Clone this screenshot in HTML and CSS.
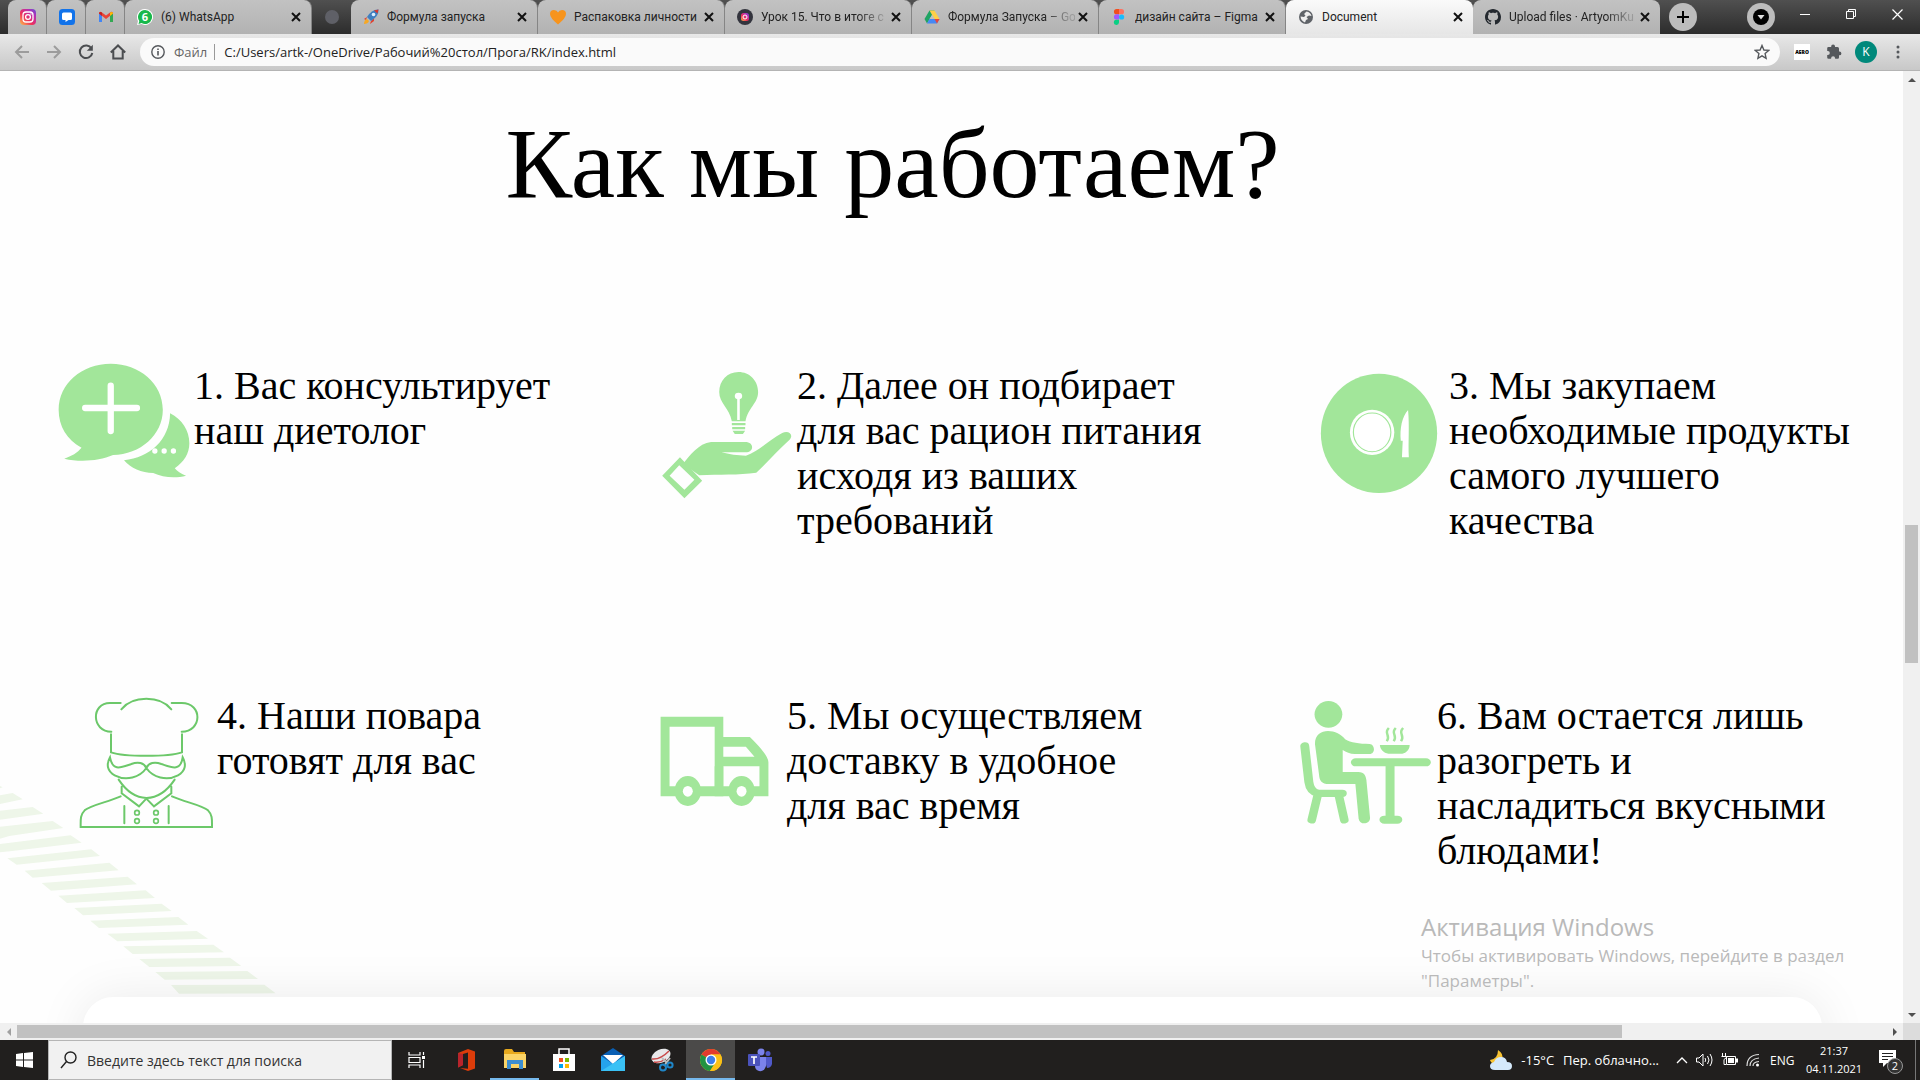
FILE: index.html
```html
<!DOCTYPE html>
<html lang="ru">
<head>
<meta charset="utf-8">
<title>Document</title>
<link rel="stylesheet" href="styles.css">
</head>
<body>
<svg class="defs" aria-hidden="true">
  <defs>
    <linearGradient id="insta" x1="0" y1="1" x2="1" y2="0"><stop offset="0" stop-color="#fdc04a"/><stop offset=".4" stop-color="#ee2f5b"/><stop offset=".75" stop-color="#b52fb4"/><stop offset="1" stop-color="#5a52d8"/></linearGradient>
    <symbol id="x" viewBox="0 0 10 10"><path d="M1 1l8 8M9 1L1 9" stroke="#111" stroke-width="2"/></symbol>
  </defs>
</svg>

<header class="tabs" role="tablist">
  <div class="tab pinned" role="tab" aria-label="Instagram"><svg class="fav" viewBox="0 0 16 16"><rect width="16" height="16" rx="4" fill="url(#insta)"/><rect x="3" y="3" width="10" height="10" rx="3" fill="none" stroke="#fff" stroke-width="1.3"/><circle cx="8" cy="8" r="2.4" fill="none" stroke="#fff" stroke-width="1.3"/><circle cx="11" cy="5" r=".7" fill="#fff"/></svg></div>
  <div class="tab pinned" role="tab" aria-label="Chat"><svg class="fav" viewBox="0 0 16 16"><rect width="16" height="16" rx="3.5" fill="#1273ea"/><path d="M4.500 3.500h7q1.500 0 1.500 1.500v4.500q0 1.500-1.500 1.500H9.500l-3 2V11h-2Q3 11 3 9.500V5q0-1.500 1.500-1.500z" fill="#fff"/></svg></div>
  <div class="tab pinned" role="tab" aria-label="Gmail"><svg class="fav" viewBox="0 0 16 16"><path d="M1 4v9h3V6z" fill="#4285f4"/><path d="M15 4v9h-3V6z" fill="#34a853"/><path d="M1 4.500l7 5.500 7-5.500V4q-1-2-3-.5L8 6.500 4 3.500Q2 2 1 4z" fill="#ea4335"/><path d="M12 3.500q3-1.500 3 1L12 7z" fill="#fbbc04"/><path d="M1 4.500L4 7V3.500Q1 2 1 4.500z" fill="#c5221f"/></svg></div>
  <div class="tab" role="tab"><svg class="fav" viewBox="0 0 16 16"><path d="M8 0a8 8 0 1 1-3.600 15.100L0 16l1-4A8 8 0 0 1 8 0z" fill="#fff"/><path d="M8 1a7 7 0 1 1-3.400 13.100L1.500 15l.8-3A7 7 0 0 1 8 1z" fill="#19b84b"/><text x="8" y="12" text-anchor="middle" font-family="Open Sans" font-weight="700" font-size="11" fill="#fff">6</text></svg><span class="title">(6) WhatsApp</span><button class="close" aria-label="Закрыть"><svg><use href="#x"/></svg></button></div>
  <div class="ghost"><i></i></div>
  <div class="tab" role="tab"><svg class="fav" viewBox="0 0 16 16"><path d="M4 8L1 10l2 1M8 12l-1 3 4-3V9z" fill="#e0412f"/><path d="M15.500.5Q9 0 4 8l4 4q8-5 7.500-11.500z" fill="#3f7fc0"/><path d="M15.500.5L11 1.500l3.500 3z" fill="#d9372b"/><circle cx="10.500" cy="5.500" r="1.800" fill="#dbeeff"/><path d="M1 15q0-4 3-5l2 2q-1 3-5 3z" fill="#f7a823"/></svg><span class="title">Формула запуска</span><button class="close" aria-label="Закрыть"><svg><use href="#x"/></svg></button></div>
  <div class="tab" role="tab"><svg class="fav" viewBox="0 0 16 16"><path d="M8 15.500Q0 9 0 5q0-4 4-4 3 0 4 2.500Q9 1 12 1q4 0 4 4 0 4-8 10.500z" fill="#f7941d"/></svg><span class="title">Распаковка личности</span><button class="close" aria-label="Закрыть"><svg><use href="#x"/></svg></button></div>
  <div class="tab" role="tab"><svg class="fav" viewBox="0 0 16 16"><circle cx="8" cy="8" r="8" fill="#33343d"/><rect x="4" y="4" width="8" height="8" rx="2.500" fill="url(#insta)"/><circle cx="8" cy="8" r="2" fill="none" stroke="#fff"/></svg><span class="title fade">Урок 15. Что в итоге с</span><button class="close" aria-label="Закрыть"><svg><use href="#x"/></svg></button></div>
  <div class="tab" role="tab"><svg class="fav" viewBox="0 0 16 16"><path d="M5.500 1.500h5L8 6l-5 8.500L.5 10z" fill="#1fa463"/><path d="M5.500 1.500h5l5 8.500h-5z" fill="#ffcf48"/><path d="M5.500 10h10L13 14.500H3z" fill="#4688f4"/><path d="M10.500 10h5L13 14.500z" fill="#e8453c"/><path d="M8 6l2.500 4h-5z" fill="#c0c0c0"/></svg><span class="title fade">Формула Запуска – Go</span><button class="close" aria-label="Закрыть"><svg><use href="#x"/></svg></button></div>
  <div class="tab" role="tab"><svg class="fav" viewBox="0 0 16 16"><path d="M8 0H5.600a2.600 2.600 0 0 0 0 5.300H8z" fill="#f24e1e"/><path d="M8 0h2.400a2.600 2.600 0 0 1 0 5.300H8z" fill="#ff7262"/><path d="M8 5.300H5.600a2.600 2.600 0 0 0 0 5.300H8z" fill="#a259ff"/><circle cx="10.600" cy="8" r="2.600" fill="#1abcfe"/><path d="M8 10.700H5.600A2.600 2.600 0 1 0 8 13.400z" fill="#0acf83"/></svg><span class="title">дизайн сайта – Figma</span><button class="close" aria-label="Закрыть"><svg><use href="#x"/></svg></button></div>
  <div class="tab active" role="tab" aria-selected="true"><svg class="fav" viewBox="0 0 16 16"><circle cx="8" cy="8" r="7" fill="#5f6368"/><path d="M8.500 2.500L6 5l1.500 1.500L6 8 2.500 7.500Q3 12 7 13.500L8 11l2-1-1.500-2L11 6.500l2.500.5Q12.500 3 8.500 2.500z" fill="#eee"/></svg><span class="title">Document</span><button class="close" aria-label="Закрыть"><svg><use href="#x"/></svg></button></div>
  <div class="tab last" role="tab"><svg class="fav" viewBox="0 0 16 16"><path fill="#24292f" d="M8 0C3.580 0 0 3.580 0 8c0 3.540 2.290 6.530 5.470 7.590.4.070.55-.17.55-.38 0-.19-.01-.82-.01-1.490-2.010.37-2.530-.49-2.690-.94-.09-.23-.48-.94-.82-1.130-.28-.15-.68-.52-.01-.53.63-.01 1.080.58 1.230.82.72 1.210 1.870.87 2.330.66.070-.52.280-.87.510-1.070-1.780-.2-3.640-.89-3.640-3.950 0-.87.310-1.590.82-2.150-.08-.2-.36-1.020.08-2.120 0 0 .67-.21 2.200.82.640-.18 1.320-.27 2-.27s1.360.09 2 .27c1.530-1.040 2.200-.82 2.200-.82.440 1.100.160 1.920.080 2.120.510.560.820 1.270.820 2.150 0 3.070-1.870 3.750-3.650 3.950.290.250.540.730.540 1.480 0 1.070-.01 1.930-.01 2.200 0 .210.150.460.550.380A8.010 8.010 0 0 0 16 8c0-4.420-3.580-8-8-8z"/></svg><span class="title fade">Upload files · ArtyomKu</span><button class="close" aria-label="Закрыть"><svg><use href="#x"/></svg></button></div>
  <button class="round" aria-label="Новая вкладка"><svg width="14" height="14"><path d="M7 1v12M1 7h12" stroke="#000" stroke-width="2"/></svg></button>
  <button class="round search-tabs" aria-label="Поиск вкладок"><svg width="16" height="16"><circle cx="8" cy="8" r="8"/><path d="M4.500 6h7L8 10.500z" fill="#ddd"/></svg></button>
  <div class="window">
    <button aria-label="Свернуть"><svg width="10" height="10"><path d="M0 5.500h10" stroke="#fff"/></svg></button>
    <button aria-label="Восстановить"><svg width="10" height="10" fill="none" stroke="#fff"><path d="M.5 2.500h7v7h-7zM2.500 2.500v-2h7v7h-2"/></svg></button>
    <button aria-label="Закрыть окно"><svg width="11" height="11"><path d="M.5.5l10 10M10.500.5l-10 10" stroke="#fff" stroke-width="1.200"/></svg></button>
  </div>
</header>

<nav class="toolbar">
  <button class="tool dim" aria-label="Назад"><svg viewBox="0 0 16 16"><path d="M15 8H2M8 2L2 8l6 6"/></svg></button>
  <button class="tool dim" aria-label="Вперёд"><svg viewBox="0 0 16 16"><path d="M1 8h13M8 2l6 6-6 6"/></svg></button>
  <button class="tool" aria-label="Обновить"><svg viewBox="0 0 16 16"><path d="M13.500 4.500A6.300 6.300 0 1 0 14.300 9"/><path d="M14.800.8v6H8.800z" fill="#4b4d50" stroke="none"/></svg></button>
  <button class="tool" aria-label="Домой"><svg viewBox="0 0 16 16"><path d="M.8 8.500L8 1.500l7.200 7M3.300 7v7.500h9.400V7"/></svg></button>
  <div class="omnibox">
    <svg class="info" viewBox="0 0 14 14"><circle cx="7" cy="7" r="6.200" fill="none" stroke="#55585c" stroke-width="1.400"/><path d="M7 6v4.500M7 3.500v1.600" stroke="#55585c" stroke-width="1.600"/></svg>
    <label for="url">Файл</label>
    <input id="url" type="text" value="C:/Users/artk-/OneDrive/Рабочий%20стол/Прога/RK/index.html">
    <svg class="star" viewBox="0 0 16 16"><path d="M8 1.500l1.900 4.500 4.800.4-3.600 3.200 1 4.800L8 11.900l-4.100 2.500 1-4.800L1.300 6.400 6.100 6z" fill="none" stroke="#55585c" stroke-width="1.400"/></svg>
  </div>
  <button class="tool ext" aria-label="Aero"><span>AERO</span></button>
  <button class="tool" aria-label="Расширения"><svg viewBox="0 0 16 16"><path d="M13.500 7.500H13V4.500Q13 3 11.500 3H9V2.300a1.900 1.900 0 0 0-3.800 0V3H2.500Q1.200 3 1.200 4.300v2.600h.6a2 2 0 0 1 0 4h-.6v2.600q0 1.300 1.300 1.300h2.600v-.6a2 2 0 0 1 4 0v.6h2.600q1.300 0 1.300-1.300v-2.200h.5a1.900 1.900 0 0 0 0-3.800z" fill="#55585c" stroke="none"/></svg></button>
  <button class="tool avatar" aria-label="Профиль"><span>K</span></button>
  <button class="tool" aria-label="Меню"><svg viewBox="0 0 16 16"><g fill="#55585c" stroke="none"><circle cx="8" cy="3" r="1.500"/><circle cx="8" cy="8" r="1.500"/><circle cx="8" cy="13" r="1.500"/></g></svg></button>
</nav>

<div class="view">
  <main class="page">
    <svg class="stripes" viewBox="0 300 900 660" fill="#eef6e9">
      <path d="M0 318l8 4-8 3zM0 346l38-7 30 19-68 14zM0 392l98-11 32 20-130 18zM0 440l158-17 32 21-162 24-28 8zM0 492l212-26 33 22-215 26-30 3z"/>
      <path d="M22 535l252-27 26 20-250 26zM74 572l254-24 28 23-258 22zM125 609l258-19 28 23-258 19zM175 647l262-16 28 23-264 15zM223 684l262-13 30 22-266 13zM271 722l264-11 30 23-268 10zM322 761l268-8 34 23-272 8zM370 799l270-5 32 23-274 5zM418 837l272-4 34 25-276 3zM466 876l276-3 32 24-280 2zM513 915l280-1 34 26-290 1z"/>
    </svg>
    <h1>Как мы работаем?</h1>
    <ol class="steps upper">
      <li>
        <svg viewBox="42 69 422 420" preserveAspectRatio="none">
          <path d="M213 71c87 0 157 60 157 138 0 76-68 134-150 136-42 18-100 22-147 11 22-8 40-18 52-33-44-24-69-64-69-114 0-78 70-138 157-138z"/>
          <path d="M392 220c36 18 58 52 58 90 0 30-16 56-44 75 8 10 20 17 34 22-30 8-70 6-99-8-35 0-68-14-88-38 78-8 137-60 139-141z"/>
          <path d="M213 137v136M136 204h156" stroke="#fff" stroke-width="19" stroke-linecap="round"/>
          <g fill="#fff"><circle cx="346" cy="333" r="8"/><circle cx="374" cy="333" r="8"/><circle cx="402" cy="333" r="8"/></g>
        </svg>
        <p>1. Вас консультирует<br>наш диетолог</p>
      </li>
      <li>
        <svg viewBox="46 69 378 420" preserveAspectRatio="none">
          <path d="M266 96c30 0 53 26 53 60 0 34-28 48-34 88h-37c-6-40-34-54-34-88 0-34 22-60 52-60z"/>
          <path d="M248 249h37v7h-37zM249 261h35v7h-35zM250 272h34l-6 10h-22z"/>
          <path d="M266 168v72" stroke="#fff" stroke-width="7"/><circle cx="266" cy="168" r="10" fill="#fff"/>
          <path d="M116 372c18-24 42-62 76-66h92c26 0 24 32 0 31h-64c20 6 44 10 66 10 34-12 60-46 98-68 18-10 32 6 20 20-32 32-58 66-90 99-48 8-100 4-154 8z"/>
          <path d="M108 352l60 70-48 53-60-68zM106 376l-26 31 40 42 27-30z" fill-rule="evenodd"/>
        </svg>
        <p>2. Далее он подбирает<br>для вас рацион питания<br>исходя из ваших<br>требований</p>
      </li>
      <li>
        <svg viewBox="23 69 366 420" preserveAspectRatio="none">
          <ellipse cx="206" cy="280" rx="152" ry="179"/>
          <ellipse cx="188" cy="277" rx="58" ry="68" fill="#fff"/>
          <ellipse cx="188" cy="277" rx="49" ry="58" fill="none" stroke="#a2e69a" stroke-width="3"/>
          <path d="M282 210c-16 20-22 56-19 92h5l-2 50h18c-2-48 2-90-2-142z" fill="#fff"/>
        </svg>
        <p>3. Мы закупаем<br>необходимые продукты<br>самого лучшего<br>качества</p>
      </li>
    </ol>
    <ol class="steps lower">
      <li>
        <svg class="line" viewBox="231 39 420 420" preserveAspectRatio="none">
          <path d="M362 69h-32c-58 0-56 86 4 86M364 88c34-42 116-42 150 0M515 69h30c64 0 62 86 0 86M333 163v54c40 14 172 14 213 0v-54"/>
          <path d="M330 232c8 44 34 30 64 20 20-8 38-4 45 12 7-16 25-20 45-12 30 10 58 24 64-20 12 22 8 42-14 54-34 18-76 6-95-22-19 28-61 40-95 22-22-12-26-32-14-54z"/>
          <path d="M356 299c48 72 118 74 168 0M365 320v20l52 39 22-23 23 23 52-39v-20M362 349c-40 18-90 26-108 42-14 14-12 30-12 50h394c0-20 2-36-12-50-18-16-68-24-108-42M373 378v52M506 378v52"/>
          <g stroke-width="5"><circle cx="411" cy="398" r="7"/><circle cx="468" cy="398" r="7"/><circle cx="411" cy="423" r="7"/><circle cx="468" cy="423" r="7"/></g>
        </svg>
        <p>4. Наши повара<br>готовят для вас</p>
      </li>
      <li>
        <svg viewBox="21 39 422 420" preserveAspectRatio="none">
          <path fill-rule="evenodd" d="M62 110h189v61h80q56 54 56 76v102H62zM89 140v179h136V140zM251 200v30h94l-26-30zM251 259v60h109v-60z"/>
          <ellipse cx="144" cy="333" rx="40" ry="45"/><ellipse cx="306" cy="333" rx="40" ry="45"/>
          <ellipse cx="144" cy="334" rx="15" ry="16" fill="#fff"/><ellipse cx="306" cy="334" rx="15" ry="16" fill="#fff"/>
          <path d="M225 349v-30h26v30zM225 259h26v60h-26z"/>
        </svg>
        <p>5. Мы осуществляем<br>доставку в удобное<br>для вас время</p>
      </li>
      <li>
        <svg viewBox="42 39 343 420" preserveAspectRatio="none">
          <ellipse cx="119" cy="103" rx="34" ry="40"/>
          <path d="M86 192c0-54 56-46 74-14 14 10 34 14 60 14 14 2 14 30 0 30h-36c-12 0-22-6-30-12v66h38c16 0 18 12 20 24l9 114c0 20-26 22-28 2l-8-104h-64c-20 0-24-12-25-28z"/>
          <path d="M61 198l10 108c2 18 8 30 22 34h60" fill="none" stroke="#a2e69a" stroke-width="22" stroke-linecap="round"/>
          <path d="M93 344L78 420M144 344l14 76" fill="none" stroke="#a2e69a" stroke-width="21" stroke-linecap="round"/>
          <path d="M186 247h172M256 419h32" fill="none" stroke="#a2e69a" stroke-width="24" stroke-linecap="round"/>
          <path d="M259 250h22v165h-22zM245 195h73c0 14-8 24-18 26h-34c-12-2-20-12-21-26z"/>
          <path d="M267 144c-14 16 6 22-5 40M284 144c-14 16 6 22-5 40M302 144c-14 16 6 22-5 40" fill="none" stroke="#a2e69a" stroke-width="6"/>
        </svg>
        <p>6. Вам остается лишь<br>разогреть и<br>насладиться вкусными<br>блюдами!</p>
      </li>
    </ol>
    <section class="card"></section>
  </main>
  <div class="vbar"><i class="up"></i><div class="vtrack"><b></b></div><i class="down"></i></div>
  <div class="hbar"><i class="left"></i><div class="htrack"><b></b></div><i class="right"></i></div>
  <div class="corner"></div>
  <aside class="watermark"><strong>Активация Windows</strong><span>Чтобы активировать Windows, перейдите в раздел<br>"Параметры".</span></aside>
</div>

<footer class="taskbar">
  <button class="app start" aria-label="Пуск"><svg width="17" height="16"><path d="M0 2l7-1v6.500H0zM8 1l9-1v7.500H8zM0 8.500h7V15l-7-1zM8 8.500h9V16l-9-1z" fill="#fff"/></svg></button>
  <div class="search">
    <svg width="18" height="18" fill="none" stroke="#222" stroke-width="1.400"><circle cx="10.500" cy="6.500" r="5.500"/><path d="M6.500 10.500L1 17"/></svg>
    <input type="text" aria-label="Поиск" placeholder="Введите здесь текст для поиска">
  </div>
  <button class="app" aria-label="Представление задач"><svg width="18" height="16" fill="none" stroke="#fff" stroke-width="1.200"><path d="M1 0v3h11V0M1 5.500h11v5H1zM1 16v-3h11v3M15.500 0v3M15.500 8v8"/><path d="M14 4h3v3h-3z" fill="#fff" stroke="none"/></svg></button>
  <button class="app" aria-label="Office"><svg width="20" height="24"><path d="M12 1l7 2.500v17L12 23l-8-3 8 .8V4.500L7 6v11l-5 2.500V5z" fill="#dc3c0a"/><path d="M7 6L2 5v14.500L7 17z" fill="#b8242c"/></svg></button>
  <button class="app open" aria-label="Проводник"><svg width="24" height="24"><path d="M1 3q0-2 2-2h6l2 3h11v16H1z" fill="#e8a91d"/><path d="M1 6h22v14H1z" fill="#fbd467"/><path d="M4 12h16v9h-4v-5H8v5H4z" fill="#3d8ed0"/></svg></button>
  <button class="app" aria-label="Магазин"><svg width="24" height="24"><path d="M7 7V1h10v6" fill="none" stroke="#fff" stroke-width="1.500"/><path d="M1 6h22v17H1z" fill="#fff"/><path d="M7 10h4v4H7z" fill="#f25022"/><path d="M13 10h4v4h-4z" fill="#7fba00"/><path d="M7 16h4v4H7z" fill="#00a4ef"/><path d="M13 16h4v4h-4z" fill="#ffb900"/></svg></button>
  <button class="app" aria-label="Почта"><svg width="24" height="24"><path d="M0 8l12-8 12 8v15H0z" fill="#0a5fb4"/><path d="M0 8l12 8 12-8v15H0z" fill="#25a3ec"/><path d="M2 7h20l-10 9z" fill="#fff"/><path d="M0 23L24 8v15z" fill="#3ac1f5"/></svg></button>
  <button class="app" aria-label="Ножницы"><svg width="24" height="24"><ellipse cx="11" cy="8" rx="10" ry="6.500" transform="rotate(-25 11 8)" fill="#e8e8ea"/><path d="M2 11q8 1 17-8M4 14q6 1 12-3" stroke="#c94a4a" stroke-width="1.500" fill="none"/><path d="M12 10l6 6M20 10l-6 8" stroke="#bbb" stroke-width="2"/><circle cx="13" cy="19.500" r="3" fill="none" stroke="#1f86c8" stroke-width="2"/><circle cx="20" cy="17" r="2.600" fill="none" stroke="#1f86c8" stroke-width="2"/></svg></button>
  <button class="app open current" aria-label="Chrome"><svg width="24" height="24"><circle cx="12" cy="12" r="11" fill="#fbc116"/><path d="M12 12L2.500 6.500A11 11 0 0 1 21.500 6.500H12z" fill="#e33b2e"/><path d="M2.500 6.500A11 11 0 0 0 11 23l5.500-8.500L12 12z" fill="#229342"/><path d="M12 6.500h9.500A11 11 0 0 1 11 23l5.500-8.500z" fill="#fbc116"/><circle cx="12" cy="12" r="5.500" fill="#fff"/><circle cx="12" cy="12" r="4.200" fill="#3f7fe8"/></svg></button>
  <button class="app" aria-label="Teams"><svg width="24" height="24"><circle cx="13" cy="4" r="3.500" fill="#7b83eb"/><circle cx="20" cy="5.500" r="2.500" fill="#5059c9"/><path d="M16 9h8v7q-1 4-5 4z" fill="#5059c9"/><path d="M7 9h11v9q-2 6-7 5-4-1-4-5z" fill="#7b83eb"/><rect y="6" width="12" height="12" rx="1" fill="#4b53bc"/><path d="M3 9h6M6 9v7" stroke="#fff" stroke-width="1.700"/></svg></button>

  <div class="tray">
    <svg class="weather" width="24" height="22"><path d="M9 1q6 4 4 9l-6 5q-5 0-6-4Q9 10 9 1z" fill="#f8c332"/><path d="M6 21q-5 0-5-4 0-3 4-4 2-5 7-5t6 5q5 0 5 4t-4 4z" fill="#d5e9fb"/></svg>
    <span class="temp">-15°C</span>
    <span class="sky">Пер. облачно...</span>
    <svg class="chev" width="12" height="8" fill="none" stroke="#fff" stroke-width="1.300"><path d="M1 7l5-5 5 5"/></svg>
    <svg width="17" height="14" fill="none" stroke="#fff"><path d="M.5 5h2.500l4-4v12l-4-4H.5zM9 5q1.500 2 0 4M11.500 3q3 4 0 8M14 1q4 6 0 12"/></svg>
    <svg width="17" height="14" fill="none" stroke="#fff"><path d="M5.500 3.500h9v8h-9z"/><path d="M7 5h6v5H7zM15 5.500h2v4h-2z" fill="#fff" stroke="none"/><path d="M1.500 0v3M4.500 0v3M.5 3.500h5v1l-2.500 2v5h2"/></svg>
    <svg width="14" height="14" fill="none" stroke="#ddd" stroke-width="1.200"><path d="M1 13Q1 2 13 1.500M4 13q0-7 9-8M7 13q0-4 6-4.500"/><circle cx="11.500" cy="12" r="1.500" fill="#fff" stroke="none"/></svg>
    <span class="lang">ENG</span>
    <time>21:37<br>04.11.2021</time>
    <div class="notes"><svg width="17" height="18"><path d="M0 0h17v13H8l-4 4v-4H0z" fill="#fff"/><path d="M3 3.500h11M3 6.500h11M3 9.500h6" stroke="#222"/></svg><span class="count">2</span></div>
    <i class="peek"></i>
  </div>
</footer>
</body>
</html>
```
FILE: styles.css
```css
* { box-sizing: border-box; }
body {
  margin: 0;
  height: 100vh;
  display: grid;
  grid-template-rows: 34px 37px 1fr 40px;
  grid-template-columns: 100%;
  overflow: hidden;
  background: #fff;
  font-family: "Open Sans", "Noto Sans", sans-serif;
}
button { border: 0; padding: 0; background: none; color: inherit; font: inherit; }
.defs { position: absolute; width: 0; height: 0; }

/* tab strip */
.tabs { display: flex; padding-left: 8px; background: linear-gradient(#505050, #2c2c2c); }
.tab {
  flex: 0 1 187px;
  min-width: 0;
  display: flex;
  align-items: center;
  padding: 0 10px 0 12px;
  border-radius: 8px 8px 0 0;
  border-right: 1px solid #858585;
  background: linear-gradient(#c2c2c2, #b2b2b2);
  font-family: Roboto, "Open Sans", sans-serif;
  font-size: 12px;
  color: #222;
}
.pinned { flex: 0 0 39px; padding: 0 0 0 12px; }
.active { background: linear-gradient(#fafafa, #e6e6e6); border-right: 0; }
.last { border-right: 0; }
.fav { width: 16px; height: 16px; flex: none; }
.title {
  flex: 1;
  min-width: 0;
  margin: 0 3px 0 8px;
  overflow: hidden;
  white-space: nowrap;
}
.fade { mask-image: linear-gradient(90deg, #000 96px, rgba(0, 0, 0, .2) 122px); }
.close { display: flex; }
.close svg { width: 10px; height: 10px; }
.ghost { flex: 0 0 39px; display: grid; place-items: center; }
.ghost i { width: 14px; height: 14px; border-radius: 50%; background: #5f6067; }
.round {
  flex: none;
  width: 28px;
  height: 28px;
  margin: 3px 0 0 9px;
  border-radius: 50%;
  display: grid;
  place-items: center;
  background: #bcbcbc;
}
.search-tabs { margin-left: auto; }
.window { display: flex; margin-left: 7px; }
.window button { width: 46px; height: 28px; display: grid; place-items: center; }

/* toolbar */
.toolbar {
  display: flex;
  align-items: center;
  padding: 0 6px;
  background: linear-gradient(#e8e8e8, #c8c8c8);
  border-bottom: 1px solid #b4b4b4;
}
.tool { flex: 0 0 32px; height: 28px; display: grid; place-items: center; }
.tool svg { width: 16px; height: 16px; fill: none; stroke: #4b4d50; stroke-width: 2; }
.dim svg { stroke: #9c9c9c; }
.omnibox {
  flex: 1;
  height: 28px;
  margin: 0 6px;
  padding: 0 10px 0 11px;
  display: flex;
  align-items: center;
  border-radius: 14px;
  background: #fafafa;
  font-size: 13px;
}
.info { width: 14px; height: 14px; }
.omnibox label { margin: 0 7px 0 9px; padding-right: 7px; border-right: 1px solid #999; line-height: 16px; color: #666; }
.omnibox input { flex: 1; border: 0; padding: 0 0 0 2px; background: none; font: inherit; color: #222; }
.star { width: 16px; height: 16px; }
.ext span { width: 16px; height: 16px; background: #fff; font-size: 5px; line-height: 16px; font-weight: 800; }
.avatar span { width: 22px; height: 22px; border-radius: 50%; background: #00897b; color: #fff; font-size: 12px; line-height: 22px; }

/* page viewport */
.view {
  position: relative;
  min-height: 0;
  display: grid;
  grid-template: minmax(0, 1fr) 17px / minmax(0, 1fr) 17px;
}
.page {
  position: relative;
  overflow: hidden;
  display: flex;
  flex-direction: column;
  background: #fefefe;
  font-family: "Liberation Serif", "Times New Roman", serif;
  color: #000;
}
.stripes { position: absolute; left: 0; top: 709px; width: 300px; height: 220px; }
h1 {
  margin: 35px 118px 142px 0;
  font-size: 100px;
  line-height: 115px;
  font-weight: 400;
  text-align: center;
}
.steps { position: relative; display: grid; margin: 0; padding: 0; list-style: none; }
.upper { grid-template-columns: 603fr 652fr 594fr; padding-left: 54px; }
.lower { grid-template-columns: 570fr 650fr 606fr; padding-left: 77px; margin-top: 150px; }
.steps li { display: flex; }
.steps svg { flex: none; width: 140px; height: 140px; fill: #a2e69a; }
.steps .line { fill: none; stroke: #6cc86a; stroke-width: 6; stroke-linecap: round; }
.steps p { margin: 0; min-height: 180px; font-size: 40px; line-height: 45px; white-space: nowrap; }
.card {
  flex: none;
  position: relative;
  height: 400px;
  margin: 124px 81px 0 83px;
  border-radius: 30px;
  background: #fff;
  box-shadow: 0 0 50px rgba(0, 0, 0, .08);
}

/* scroll bars */
.vbar, .hbar { display: flex; background: #f0f0f0; }
.vbar { flex-direction: column; }
.vbar i, .hbar i { flex: 0 0 17px; display: grid; place-items: center; }
.vbar i::before, .hbar i::before { content: ""; border: 4px solid transparent; }
.vbar .up::before { border-top-width: 0; border-bottom-color: #505050; }
.vbar .down::before { border-bottom-width: 0; border-top-color: #505050; }
.hbar .left::before { border-left-width: 0; border-right-color: #a0a0a0; }
.hbar .right::before { border-right-width: 0; border-left-color: #505050; }
.vtrack { flex: 1; display: grid; grid-template-rows: 437fr 138fr 343fr; }
.vtrack b { grid-row: 2; margin: 0 2px; background: #c1c1c1; }
.htrack { flex: 1; display: grid; grid-template-columns: 1605fr 264fr; }
.htrack b { margin: 2px 0; background: #c1c1c1; }
.corner { background: #dcdcdc; }

.watermark { position: absolute; right: 80px; bottom: 47px; width: 419px; color: #b9b9b9; white-space: nowrap; }
.watermark strong { display: block; font-size: 24px; line-height: 32px; font-weight: 400; }
.watermark span { display: block; font-size: 17px; line-height: 25px; }

/* taskbar */
.taskbar { display: flex; background: #211f1e; color: #fff; }
.app { flex: 0 0 49px; display: grid; place-items: center; }
.start { flex-basis: 48px; }
.open { box-shadow: inset 0 -2px #76b9ed; }
.current { background: #4b4a49; }
.search {
  flex: 0 1 344px;
  display: flex;
  align-items: center;
  padding-left: 11px;
  border: 1px solid #b5b5b5;
  background: #f1f1f1;
}
.search input { flex: 1; min-width: 0; margin-left: 9px; padding: 0; border: 0; background: none; font: inherit; font-size: 14px; }
.search input::placeholder { color: #333; opacity: 1; }
.tray { margin-left: auto; display: flex; align-items: center; font-size: 13px; white-space: nowrap; }
.temp { margin-left: 8px; }
.sky { margin: 0 17px 0 9px; }
.tray svg + svg { margin-left: 8px; }
.lang { width: 24px; margin-left: 10px; font-size: 12px; }
time { width: 56px; margin-left: 12px; font-size: 11px; line-height: 18px; text-align: center; }
.notes { position: relative; width: 25px; height: 20px; margin-left: 17px; }
.count {
  position: absolute;
  left: 8px;
  top: 8px;
  width: 16px;
  height: 16px;
  border: 1px solid #999;
  border-radius: 50%;
  background: #333;
  font-size: 11px;
  line-height: 14px;
  text-align: center;
}
.peek { width: 1px; height: 40px; margin: 0 4px 0 11px; background: #777; }
```
